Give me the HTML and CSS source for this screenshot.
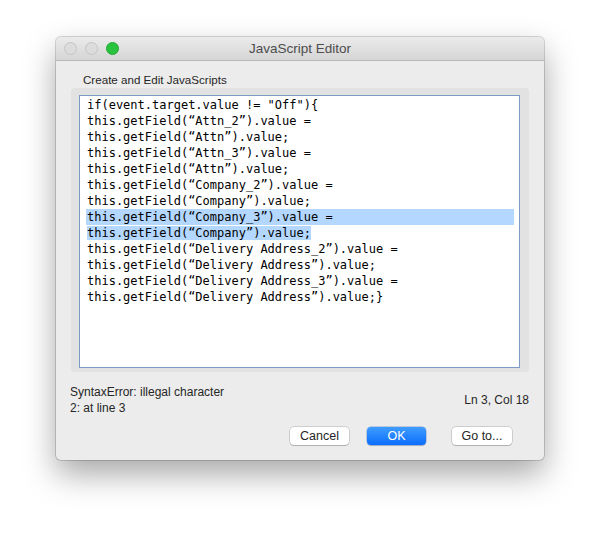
FILE: index.html
```html
<!DOCTYPE html>
<html lang="en">
<head>
    <meta charset="UTF-8">
    <title>JavaScript Editor</title>
    <link rel="stylesheet" href="styles.css">
</head>
<body>
    <div class="window">
        <div class="titlebar">
            <div class="lights">
                <span class="light"></span>
                <span class="light"></span>
                <span class="light green"></span>
            </div>
            <div class="title">JavaScript Editor</div>
        </div>
        <div class="content">
            <div class="label">Create and Edit JavaScripts</div>
            <div class="group">
                <div class="editor">
                    <div class="code">
                        <div class="line">if(event.target.value != "Off"){</div>
                        <div class="line">this.getField(“Attn_2”).value =</div>
                        <div class="line">this.getField(“Attn”).value;</div>
                        <div class="line">this.getField(“Attn_3”).value =</div>
                        <div class="line">this.getField(“Attn”).value;</div>
                        <div class="line">this.getField(“Company_2”).value =</div>
                        <div class="line">this.getField(“Company”).value;</div>
                        <div class="line selected">this.getField(“Company_3”).value =</div>
                        <div class="line"><span class="selected">this.getField(“Company”).value;</span></div>
                        <div class="line">this.getField(“Delivery Address_2”).value =</div>
                        <div class="line">this.getField(“Delivery Address”).value;</div>
                        <div class="line">this.getField(“Delivery Address_3”).value =</div>
                        <div class="line">this.getField(“Delivery Address”).value;}</div>
                    </div>
                </div>
            </div>
            <div class="status">
                <div class="error">SyntaxError: illegal character<br>2: at line 3</div>
                <div class="position">Ln 3, Col 18</div>
            </div>
            <div class="actions">
                <button class="btn">Cancel</button>
                <button class="btn primary">OK</button>
                <button class="btn goto">Go to...</button>
            </div>
        </div>
    </div>
</body>
</html>
```

FILE: styles.css
```css
html {
    background: #ffffff;
}

body {
    margin: 0;
    padding-top: 37px;
    min-height: 534px;
    box-sizing: border-box;
    background: #ffffff;
    font-family: "Liberation Sans", Arial, sans-serif;
    color: #262626;
}

.window {
    width: 488px;
    height: 423px;
    margin: 0 auto;
    box-sizing: border-box;
    background: #ececec;
    border-radius: 5px;
    box-shadow: 0 0 0 1px rgba(0, 0, 0, 0.16), 0 14px 32px rgba(0, 0, 0, 0.35);
    overflow: hidden;
}

.titlebar {
    height: 23px;
    display: flex;
    align-items: center;
    position: relative;
    background: linear-gradient(#ebebeb, #d5d5d5);
    border-bottom: 1px solid #b9b9b9;
}

.lights {
    display: flex;
    gap: 8px;
    padding-left: 8px;
}

.light {
    width: 11px;
    height: 11px;
    border-radius: 50%;
    background: #dcdcdc;
    border: 0.5px solid #c4c4c4;
}

.light.green {
    background: #29c33f;
    border-color: #20a832;
}

.title {
    position: absolute;
    left: 0;
    right: 0;
    top: 4px;
    text-align: center;
    font-size: 13.5px;
    color: #4d4d4d;
}

.content {
    padding: 0 15px;
}

.label {
    font-size: 11.6px;
    padding: 12px 0 0 12px;
    height: 15px;
    line-height: 13px;
}

.group {
    height: 284px;
    box-sizing: border-box;
    background: #e2e2e2;
    border-radius: 4px;
    padding: 7px 9px 4px 8px;
}

.editor {
    height: 273px;
    box-sizing: border-box;
    padding-top: 1px;
    background: #ffffff;
    border: 1px solid #7c9cc6;
}

.code {
    margin: 0 5px 0 6px;
    font-family: "DejaVu Sans Mono", monospace;
    font-size: 12px;
    line-height: 16px;
    color: #000000;
}

.line {
    padding-left: 1px;
    white-space: pre;
}

.selected {
    background: #b3d7ff;
}

.status {
    display: flex;
    justify-content: space-between;
    align-items: center;
    font-size: 12px;
    line-height: 16px;
    padding: 12px 0 0 0;
    color: #262626;
}

.error {
    margin-left: -1px;
}

.actions {
    display: flex;
    padding: 11px 0 0 219px;
}

.btn {
    width: 59px;
    height: 18px;
    padding: 0;
    font-family: "Liberation Sans", Arial, sans-serif;
    font-size: 12.5px;
    color: #262626;
    background: #ffffff;
    border: none;
    border-radius: 4px;
    box-shadow: 0 0 0 0.5px rgba(0, 0, 0, 0.25), 0 1px 1px rgba(0, 0, 0, 0.15);
    margin-right: 18px;
}

.btn.primary {
    color: #ffffff;
    background: linear-gradient(#3f9dfe, #0b6dfd);
    box-shadow: 0 0 0 0.5px rgba(0, 60, 180, 0.4), 0 1px 1px rgba(0, 0, 0, 0.15);
    margin-right: 26px;
}

.btn.goto {
    width: 60px;
    margin-right: 0;
}
```
